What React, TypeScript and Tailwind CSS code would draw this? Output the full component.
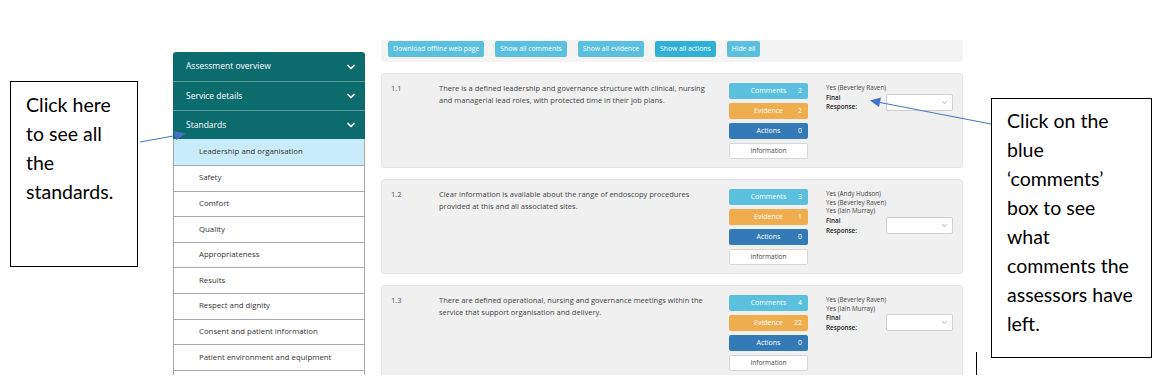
import { ChevronDown } from "lucide-react";

const sections = ["Assessment overview", "Service details", "Standards"];

const standards = [
  "Leadership and organisation",
  "Safety",
  "Comfort",
  "Quality",
  "Appropriateness",
  "Results",
  "Respect and dignity",
  "Consent and patient information",
  "Patient environment and equipment",
];

const toolbar = [
  { label: "Download offline web page", active: false },
  { label: "Show all comments", active: false },
  { label: "Show all evidence", active: false },
  { label: "Show all actions", active: true },
  { label: "Hide all", active: false },
];

const cards = [
  {
    id: "1.1",
    text: "There is a defined leadership and governance structure with clinical, nursing and managerial lead roles, with protected time in their job plans.",
    comments: 2,
    evidence: 2,
    actions: 0,
    responses: ["Yes (Beverley Raven)"],
  },
  {
    id: "1.2",
    text: "Clear information is available about the range of endoscopy procedures provided at this and all associated sites.",
    comments: 3,
    evidence: 1,
    actions: 0,
    responses: ["Yes (Andy Hudson)", "Yes (Beverley Raven)", "Yes (Iain Murray)"],
  },
  {
    id: "1.3",
    text: "There are defined operational, nursing and governance meetings within the service that support organisation and delivery.",
    comments: 4,
    evidence: 22,
    actions: 0,
    responses: ["Yes (Beverley Raven)", "Yes (Iain Murray)"],
  },
];

function Sidebar() {
  return (
    <div className="mt-[52px] w-[192px] shrink-0">
      {sections.map((s, i) => (
        <div
          key={s}
          className={`flex h-[29px] items-center justify-between bg-[#0b6b6d] pl-[13px] pr-[8px] text-[8.5px] text-white ${
            i === 0 ? "rounded-t-[3px]" : "border-t border-[#5a9a9c]"
          }`}
        >
          <span>{s}</span>
          <ChevronDown size={12} strokeWidth={3.5} />
        </div>
      ))}
      {standards.map((s, i) => (
        <div
          key={s}
          className={`flex items-center border-x border-b border-[#a7a7ad] pl-[25px] text-[7.8px] text-[#333] ${
            i === 0 ? "h-[27px] bg-[#c9ecfb]" : "h-[25.6px] bg-white"
          }`}
        >
          {s}
        </div>
      ))}
      {/* next row, cut off by the screenshot */}
      <div className="h-[25.6px] border-x border-[#a7a7ad] bg-white" />
    </div>
  );
}

function CountButton({ label, count, color }: { label: string; count: number; color: string }) {
  return (
    <div className={`relative flex h-[16px] items-center justify-center rounded-[2px] text-[7px] text-white ${color}`}>
      {label}
      <span className="absolute right-[6px]">{count}</span>
    </div>
  );
}

function Card({ card }: { card: (typeof cards)[number] }) {
  return (
    <div className="flex h-[95px] shrink-0 rounded-[3px] border border-[#e4e4e4] bg-[#f0f0f0] pl-[9px] pt-[9px]">
      <div className="w-[48px] shrink-0 text-[7.5px] leading-[11.5px] text-[#555]">{card.id}</div>
      <div className="w-[272px] shrink-0 text-[7.5px] leading-[11.5px] text-[#444]">{card.text}</div>
      <div className="ml-[18px] flex w-[79px] shrink-0 flex-col gap-[4px]">
        <CountButton label="Comments" count={card.comments} color="bg-[#5bc0de]" />
        <CountButton label="Evidence" count={card.evidence} color="bg-[#f0ad4e]" />
        <CountButton label="Actions" count={card.actions} color="bg-[#337ab7]" />
        <div className="flex h-[16px] items-center justify-center rounded-[2px] border border-[#d6d6d6] bg-white text-[6.5px] text-[#444]">
          Information
        </div>
      </div>
      <div className="ml-[18px] flex flex-col pt-[1px] text-[6.3px] leading-[8.7px] text-[#444]">
        {card.responses.map((r) => (
          <div key={r}>{r}</div>
        ))}
        <div className="flex items-center">
          <div className="w-[60px] font-semibold leading-[9.5px] text-[#222]">
            Final
            <br />
            Response:
          </div>
          <div className="flex h-[17px] w-[67px] items-center justify-end rounded-[2px] border border-[#d0d0d0] bg-white pr-[4px]">
            <ChevronDown size={7} strokeWidth={2} className="text-[#666]" />
          </div>
        </div>
      </div>
    </div>
  );
}

function Main() {
  return (
    <div className="ml-[16px] flex w-[582px] shrink-0 flex-col gap-[11px] pt-[40px]">
      <div className="flex h-[22px] shrink-0 gap-[11px] rounded-b-[3px] bg-[#f4f4f4] pl-[7px] pt-[1px]">
        {toolbar.map((b) => (
          <div
            key={b.label}
            className={`flex h-[16px] items-center rounded-[2px] px-[5px] text-[6.8px] text-white ${
              b.active ? "bg-[#31b0d5]" : "bg-[#5bc0de]"
            }`}
          >
            {b.label}
          </div>
        ))}
      </div>
      {cards.map((c) => (
        <Card key={c.id} card={c} />
      ))}
    </div>
  );
}

function Annotations() {
  return (
    <>
      <div className="absolute left-[10px] top-[81px] h-[186px] w-[128px] border border-black bg-white pl-[15px] pt-[8px] font-['Lato'] text-[19.5px] leading-[29px] text-black">
        Click here
        <br />
        to see all
        <br />
        the
        <br />
        standards.
      </div>
      <div className="absolute left-[991px] top-[98px] h-[260px] w-[161px] border border-black bg-white pl-[15px] pt-[7px] font-['Lato'] text-[19.5px] leading-[29px] text-black">
        Click on the
        <br />
        blue
        <br />
        ‘comments’
        <br />
        box to see
        <br />
        what
        <br />
        comments the
        <br />
        assessors have
        <br />
        left.
      </div>
      <svg className="absolute left-0 top-0" width="1160" height="389">
        <line x1="140" y1="142" x2="176" y2="135.5" stroke="#4472c4" strokeWidth="1" />
        <polygon points="186,133.5 174,131 176,140" fill="#4472c4" />
        <line x1="991" y1="124" x2="880" y2="102.5" stroke="#4472c4" strokeWidth="1" />
        <polygon points="870,100.5 881,97.5 879,107" fill="#4472c4" />
        <line x1="976.5" y1="352" x2="976.5" y2="375" stroke="#000" strokeWidth="1" />
      </svg>
    </>
  );
}

export default function App() {
  return (
    <div className="relative h-[389px] w-[1160px] overflow-hidden bg-white font-['Open_Sans',sans-serif]">
      <div className="flex h-[375px] overflow-hidden pl-[173px]">
        <Sidebar />
        <Main />
      </div>
      <Annotations />
    </div>
  );
}
